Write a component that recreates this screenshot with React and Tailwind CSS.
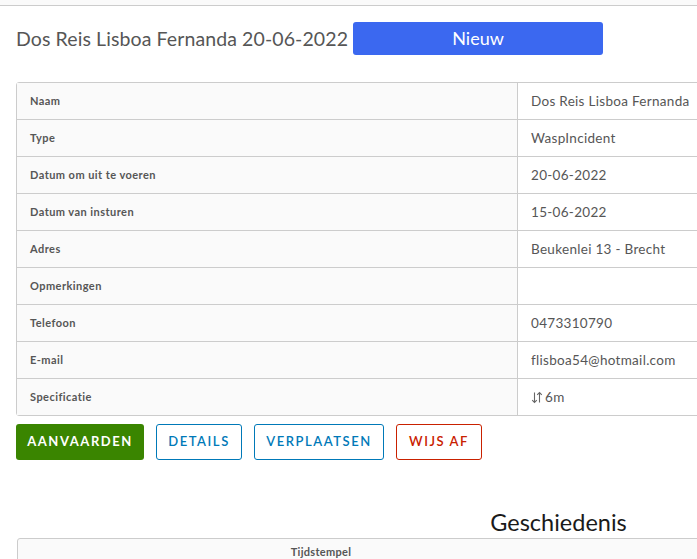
import React from 'react';

const rows = [
    ['Naam', 'Dos Reis Lisboa Fernanda'],
    ['Type', 'WaspIncident'],
    ['Datum om uit te voeren', '20-06-2022'],
    ['Datum van insturen', '15-06-2022'],
    ['Adres', 'Beukenlei 13 - Brecht'],
    ['Opmerkingen', ''],
    ['Telefoon', '0473310790'],
    ['E-mail', 'flisboa54@hotmail.com'],
    ['Specificatie', 'spec'],
];

function SortIcon() {
    return (
        <svg className="w-[12px] h-[13px] mr-[2px]" viewBox="0 0 12 13" fill="none" stroke="#666" strokeWidth="1.1">
            <path d="M3.5 1.5v10M1.2 9.2l2.3 2.3 2.3-2.3" />
            <path d="M8.5 11.5v-10M6.2 3.8l2.3-2.3 2.3 2.3" />
        </svg>
    );
}

export default function App() {
    return (
        <div
            className="w-[697px] h-[559px] overflow-hidden bg-white text-[#565656]"
            style={{ fontFamily: 'Lato, "Open Sans", sans-serif' }}
        >
            <div className="h-[6px] bg-[#fafafa] border-b border-[#cccccc]" />

            <div className="pl-[16px] w-[1100px]">
                {/* header */}
                <div className="flex items-center gap-[5px] mt-[16px] h-[33px]">
                    <h1 className="text-[19.5px] leading-none tracking-[0.1px]">Dos Reis Lisboa Fernanda 20-06-2022</h1>
                    <span className="w-[250px] h-[33px] rounded-[3px] bg-[#3b68f0] text-white text-[18px] flex items-center justify-center">
                        Nieuw
                    </span>
                </div>

                {/* details table */}
                <div className="mt-[27px] w-[1085px] border border-[#cccccc] rounded-[3px]">
                    {rows.map(([label, value], i) => (
                        <div key={label} className={'flex ' + (i > 0 ? 'h-[37px] border-t border-[#cccccc]' : 'h-[36px]')}>
                            <div className="w-[501px] shrink-0 bg-[#fafafa] border-r border-[#cccccc] flex items-center pl-[13px] text-[11px] font-bold tracking-[0.45px]">
                                {label}
                            </div>
                            <div className="flex-1 flex items-center pl-[13px] text-[13.5px] tracking-[0.3px]">
                                {value === 'spec' ? (
                                    <span className="flex items-center"><SortIcon />6m</span>
                                ) : value}
                            </div>
                        </div>
                    ))}
                </div>

                {/* actions */}
                <div className="flex gap-[12px] mt-[8px]">
                    <button className="h-[36px] w-[128px] rounded-[3px] bg-[#3a8500] text-white text-[13px] font-bold tracking-[0.12em]">
                        AANVAARDEN
                    </button>
                    <button className="h-[36px] w-[86px] rounded-[3px] border border-[#0079b8] text-[#0079b8] text-[13px] font-semibold tracking-[0.12em]">
                        DETAILS
                    </button>
                    <button className="h-[36px] w-[130px] rounded-[3px] border border-[#0079b8] text-[#0079b8] text-[13px] font-semibold tracking-[0.12em]">
                        VERPLAATSEN
                    </button>
                    <button className="h-[36px] w-[86px] rounded-[3px] border border-[#c92100] text-[#c92100] text-[13px] font-semibold tracking-[0.12em]">
                        WIJS AF
                    </button>
                </div>

                {/* history */}
                <div className="w-[1085px] mt-[48px]">
                    <h2 className="text-center text-[23.5px] leading-[28px] text-[#1a1a1a]">Geschiedenis</h2>
                    <div className="mt-[2px] ml-px border border-[#cccccc] rounded-[3px] flex h-[40px] bg-[#fafafa]">
                        <div className="w-[606px] flex justify-center pt-[5px] text-[11px] font-bold tracking-[0.3px]">Tijdstempel</div>
                    </div>
                </div>
            </div>
        </div>
    );
}
